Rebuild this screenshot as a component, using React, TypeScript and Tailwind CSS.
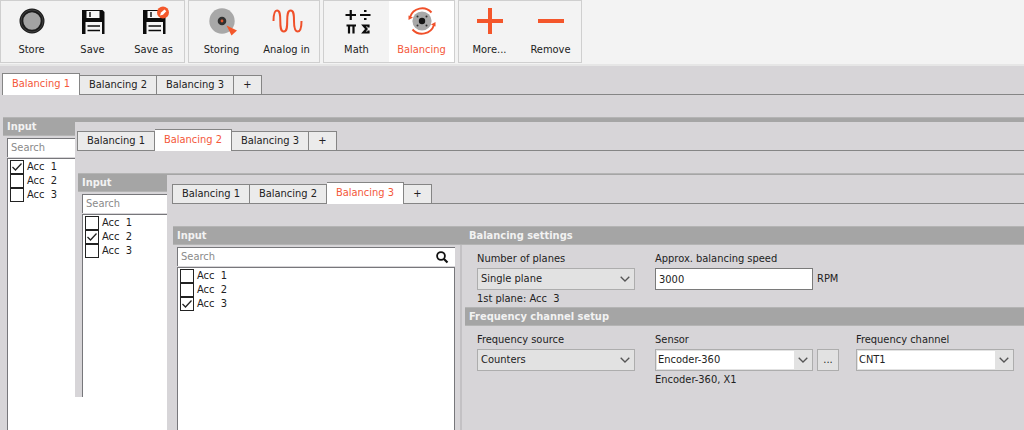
import React, { useId, useState } from "react";

function StoreIcon() {
  return (
    <svg viewBox="0 0 28 28" className="size-7">
      <circle cx="14" cy="14" r="10.6" fill="#a3a3a3" stroke="#1c1c1c" strokeWidth="3.8" />
      <circle cx="14" cy="14" r="11" fill="none" stroke="#3f3f3f" strokeWidth="1" />
    </svg>
  );
}

function Floppy() {
  return (
    <>
      <path d="M3 3h20.500l2 2v22h-22.500z" fill="#0c0c0c" />
      <path d="M7.500 4h13v7h-13zM6.500 15h16.500v12h-16.500z" fill="#f6f6f6" />
      <path d="M11 5v5M8.500 19h12.500M8.500 23.500h12.500" stroke="#0c0c0c" strokeWidth="1.4" fill="none" />
    </>
  );
}

function SaveIcon() {
  return (
    <svg viewBox="0 0 28 28" className="size-7">
      <Floppy />
    </svg>
  );
}

function SaveAsIcon() {
  return (
    <svg viewBox="0 0 28 28" className="size-7 overflow-visible">
      <Floppy />
      <circle cx="23" cy="5.500" r="6" fill="#f4582b" />
      <path d="M20 8.500l1-3 3.500-3 1.800 1.800-3.300 3.400z" fill="#fff" />
    </svg>
  );
}

function StoringIcon() {
  return (
    <svg viewBox="0 0 28 28" className="size-7 overflow-visible">
      <circle cx="14" cy="14" r="12.7" fill="#a8a8a8" />
      <circle cx="14" cy="14" r="4.3" fill="#303030" />
      <circle cx="14" cy="14" r="1.4" fill="#e2562f" />
      <path d="M18.5 18.5l10.5 5-5.5 5z" fill="#f4582b" />
    </svg>
  );
}

function AnalogIcon() {
  return (
    <svg viewBox="0 0 32 28" className="h-7 w-8" fill="none" stroke="#f0502a" strokeWidth="2">
      <path d="M2.500 14C2.500 7 3.500 3.500 6 3.500C9 3.500 9.300 8 9.300 14S9.500 24.500 12.800 24.500S16.200 20 16.200 14S16.500 3.500 19.700 3.500S23 8 23 14S23.500 24.500 26.700 24.500C29.500 24.500 30.500 21 30.500 14" />
    </svg>
  );
}

function MathIcon() {
  return (
    <svg viewBox="0 0 28 28" className="size-7" fill="none" stroke="#0c0c0c" strokeWidth="2.200">
      <path d="M2.500 8h10.500M7.750 3v10M17 8h10.500" />
      <path d="M21 4h2.500M21 12h2.500M3.500 18.500h9.500M6 18.500v8M10.500 18.500v8" />
      <path d="M25.500 20.500v-2h-5l3 3.500-3 3.500h5v-2" />
    </svg>
  );
}

function BalancingIcon() {
  return (
    <svg viewBox="0 0 28 28" className="size-7 overflow-visible">
      <circle cx="14" cy="14" r="9.600" fill="#a8a8a8" />
      <circle cx="14" cy="14" r="3.200" fill="#151515" />
      <g fill="#333">
        <circle cx="9.500" cy="9.500" r="1" />
        <circle cx="18.500" cy="9.500" r="1" />
        <circle cx="9.500" cy="18.500" r="1" />
        <circle cx="18.500" cy="18.500" r="1" />
      </g>
      <path
        d="M2 10A12.700 12.700 0 0 1 23.500 5.500M26 18A12.700 12.700 0 0 1 4.500 22.500"
        fill="none"
        stroke="#f0502a"
        strokeWidth="1.900"
      />
      <path d="M.5 8.500L.5 13 5 10.500zM27.500 19.500L27.500 15 23 17.500z" fill="#f0502a" />
    </svg>
  );
}

function PlusIcon() {
  return (
    <svg viewBox="0 0 28 28" className="size-7">
      <path d="M1 14h26M14 1v26" stroke="#f4562b" strokeWidth="4" />
    </svg>
  );
}

function MinusIcon() {
  return (
    <svg viewBox="0 0 28 28" className="size-7">
      <path d="M1 14h26" stroke="#f4562b" strokeWidth="4" />
    </svg>
  );
}

type Tool = { label: string; icon: React.ReactNode; active?: boolean };

function ToolGroup({ tools, wide }: { tools: Tool[]; wide?: boolean }) {
  return (
    <div className="flex border border-[#cfcfcf] bg-[#f3f3f3]">
      {tools.map((t) => (
        <button
          key={t.label}
          type="button"
          className={`flex flex-col items-center gap-1 pt-[6px] pb-1 text-[11px] leading-4 ${
            wide ? "w-[65px]" : "w-[61px]"
          } ${t.active ? "bg-white text-[#f4583a]" : ""}`}
        >
          {t.icon}
          <span className="pt-[3px] whitespace-nowrap">{t.label}</span>
        </button>
      ))}
    </div>
  );
}

function Tabs({ active }: { active: number }) {
  return (
    <div role="tablist" className="flex h-[22px] items-end pl-[2px]">
      {["Balancing 1", "Balancing 2", "Balancing 3", "+"].map((t, i) => {
        const on = i + 1 === active;
        return (
          <button
            key={t}
            type="button"
            role="tab"
            aria-selected={on}
            className={`border-t border-r border-[#858585] text-center whitespace-nowrap ${
              i === 0 ? "w-[78px] border-l" : i === 3 ? "w-[28px]" : "w-[77px]"
            } ${on ? "h-[22px] bg-white pb-[1px] text-[#f4583a]" : "h-5 border-b bg-[#ebebeb]"}`}
          >
            {t}
          </button>
        );
      })}
      <span className="h-px flex-1 bg-[#858585]" />
    </div>
  );
}

function Heading({ children }: { children?: React.ReactNode }) {
  return (
    <h2 className="h-[19px] border-y border-[#b4b4b4] bg-[#a5a5a5] pl-1 text-[11px] leading-[17px] font-bold text-[#f2f2f2]">
      {children}
    </h2>
  );
}

function CheckItem({ label, checked }: { label: string; checked: boolean }) {
  const [on, setOn] = useState(checked);
  return (
    <label className="flex h-[14px] items-center gap-[3px]">
      <span className="grid size-[14px] place-items-center">
        <input
          type="checkbox"
          checked={on}
          onChange={() => setOn(!on)}
          className="col-start-1 row-start-1 size-[14px] appearance-none border border-[#222] bg-white"
        />
        {on && (
          <svg viewBox="0 0 12 12" className="pointer-events-none col-start-1 row-start-1 size-3">
            <path d="M1.500 6l3 3 6-6.500" fill="none" stroke="#222" strokeWidth="1.300" />
          </svg>
        )}
      </span>
      <span className="whitespace-pre">{label}</span>
    </label>
  );
}

function BalancingWindow({ active, children }: { active: number; children?: React.ReactNode }) {
  return (
    <section className="flex h-full flex-col bg-[#d7d5d8] pt-[7px]">
      <Tabs active={active} />
      <div className="mt-[22px] ml-[3px] grid flex-1 grid-cols-[292px_1fr]">
        <div className="flex flex-col">
          <Heading>Input</Heading>
          <div className="mr-[3px] flex flex-1 border-r-2 border-[#c3c1c4] pt-[2px]">
            <div className="mr-[5px] ml-1 flex flex-1 flex-col gap-[1px]">
              <div className="flex h-[19px] items-center border-t border-l border-[#77777b] bg-white pr-[6px]">
                <input
                  type="search"
                  aria-label="Search"
                  placeholder="Search"
                  className="min-w-0 flex-1 pl-[3px] leading-4 outline-none placeholder:text-[#8a8a8a]"
                />
                <svg viewBox="0 0 14 14" className="size-[14px]" fill="none" stroke="#111">
                  <circle cx="6" cy="6" r="3.900" strokeWidth="1.800" />
                  <path d="M9 9l3.500 3.500" strokeWidth="2.200" />
                </svg>
              </div>
              <div className="flex-1 border-t border-r border-l border-[#77777b] bg-white pt-[1px] pl-[2px]">
                {[1, 2, 3].map((n) => (
                  <CheckItem key={n} label={`Acc  ${n}`} checked={n === active} />
                ))}
              </div>
            </div>
          </div>
        </div>
        <div>{children ?? <Heading />}</div>
      </div>
    </section>
  );
}

function Chevron() {
  return (
    <svg viewBox="0 0 10 6" className="h-[6px] w-[10px]" fill="none" stroke="#555" strokeWidth="1.300">
      <path d="M.7.700L5 5 9.300.700" />
    </svg>
  );
}

function Select({ id, value, editable }: { id: string; value: string; editable?: boolean }) {
  return (
    <span className="grid h-[22px] w-[158px] grid-cols-[1fr_18px] items-center border border-[#adadad] bg-[#e2e2e2]">
      <select
        id={id}
        defaultValue={value}
        className={`col-span-2 col-start-1 row-start-1 mr-[18px] h-[18px] appearance-none outline-none ${
          editable ? "ml-[1px] bg-white pl-[1px]" : "pl-[3px]"
        }`}
      >
        <option>{value}</option>
      </select>
      <span className="pointer-events-none col-start-2 row-start-1 flex justify-center">
        <Chevron />
      </span>
    </span>
  );
}

function Field({
  label,
  note,
  render,
  after,
}: {
  label: string;
  note?: string;
  render: (id: string) => React.ReactNode;
  after?: React.ReactNode;
}) {
  const id = useId();
  return (
    <div className="whitespace-nowrap">
      <label htmlFor={id} className="block">
        {label}
      </label>
      <div className="my-[1px] flex items-center gap-1">
        {render(id)}
        {after}
      </div>
      {note && <p className="whitespace-pre">{note}</p>}
    </div>
  );
}

function Settings() {
  return (
    <>
      <Heading>Balancing settings</Heading>
      <div className="grid grid-cols-[178px_201px_auto] pt-[6px] pl-3">
        <Field
          label="Number of planes"
          note="1st plane: Acc  3"
          render={(id) => <Select id={id} value="Single plane" />}
        />
        <Field
          label="Approx. balancing speed"
          render={(id) => (
            <input
              id={id}
              type="text"
              defaultValue="3000"
              className="h-[22px] w-[158px] border border-[#7a7a7a] bg-white pl-[3px] outline-none"
            />
          )}
          after="RPM"
        />
      </div>
      <Heading>Frequency channel setup</Heading>
      <div className="grid grid-cols-[178px_201px_auto] pt-[6px] pl-3">
        <Field label="Frequency source" render={(id) => <Select id={id} value="Counters" />} />
        <Field
          label="Sensor"
          note="Encoder-360, X1"
          render={(id) => <Select id={id} value="Encoder-360" editable />}
          after={
            <button
              type="button"
              aria-label="Sensor options"
              className="h-[22px] w-[22px] border border-[#adadad] bg-[#e2e2e2]"
            >
              ...
            </button>
          }
        />
        <Field label="Frequency channel" render={(id) => <Select id={id} value="CNT1" editable />} />
      </div>
    </>
  );
}

export default function App() {
  return (
    <main className="flex min-h-screen flex-col bg-[#d7d5d8] font-['DejaVu_Sans_Condensed','DejaVu_Sans',sans-serif] text-[11px] leading-4 text-[#222]">
      <header className="flex gap-[3px] border-b-2 border-[#e6e6e6] bg-[#f3f3f3] pb-[1px]">
        <ToolGroup
          tools={[
            { label: "Store", icon: <StoreIcon /> },
            { label: "Save", icon: <SaveIcon /> },
            { label: "Save as", icon: <SaveAsIcon /> },
          ]}
        />
        <ToolGroup
          wide
          tools={[
            { label: "Storing", icon: <StoringIcon /> },
            { label: "Analog in", icon: <AnalogIcon /> },
          ]}
        />
        <ToolGroup
          wide
          tools={[
            { label: "Math", icon: <MathIcon /> },
            { label: "Balancing", icon: <BalancingIcon />, active: true },
          ]}
        />
        <ToolGroup
          tools={[
            { label: "More...", icon: <PlusIcon /> },
            { label: "Remove", icon: <MinusIcon /> },
          ]}
        />
      </header>
      <div className="relative flex-1 overflow-hidden">
        <div className="absolute inset-0">
          <BalancingWindow active={1} />
        </div>
        <div className="absolute top-14 right-0 bottom-[33px] left-[75px]">
          <BalancingWindow active={2} />
        </div>
        <div className="absolute top-[109px] right-0 bottom-0 left-[167px] bg-[#d7d5d8] pl-[3px]">
          <BalancingWindow active={3}>
            <Settings />
          </BalancingWindow>
        </div>
      </div>
    </main>
  );
}
